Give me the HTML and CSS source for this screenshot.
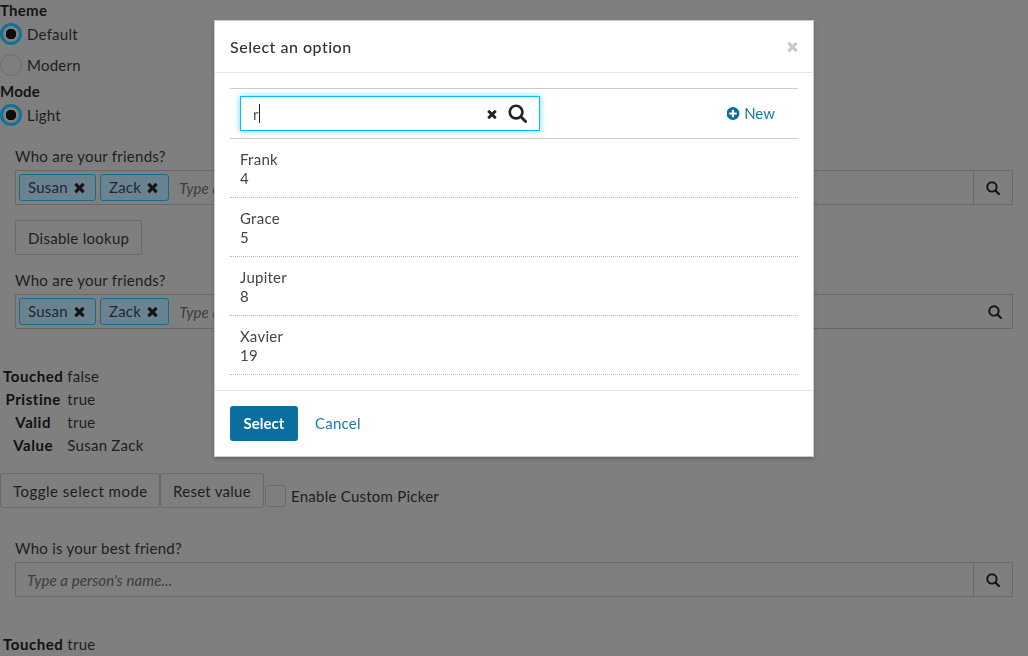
FILE: index.html
```html
<!DOCTYPE html>
<html lang="en">
    <head>
        <meta charset="UTF-8" />
        <title>Lookup demo</title>
        <link rel="stylesheet" href="styles.css">
    </head>
    <body>
        <svg class="defs" width="0" height="0">
            <symbol id="i-times" viewBox="110 238 1188 1316"><path d="M1298 1322q0 40-28 68l-136 136q-28 28-68 28t-68-28l-294-294-294 294q-28 28-68 28t-68-28l-136-136q-28-28-28-68t28-68l294-294-294-294q-28-28-28-68t28-68l136-136q28-28 68-28t68 28l294 294 294-294q28-28 68-28t68 28l136 136q28 28 28 68t-28 68l-294 294 294 294q28 28 28 68z"/></symbol>
            <symbol id="i-search" viewBox="0 0 20 20"><circle cx="8.5" cy="8.5" r="6.7" fill="none" stroke="currentColor" stroke-width="2.8"/><path d="M13.5 13.5l5 5" fill="none" stroke="currentColor" stroke-width="3" stroke-linecap="round"/></symbol>
            <symbol id="i-plus" viewBox="0 0 1536 1792"><path d="M1152 960v-128q0-26-19-45t-45-19h-256v-256q0-26-19-45t-45-19h-128q-26 0-45 19t-19 45v256h-256q-26 0-45 19t-19 45v128q0 26 19 45t45 19h256v256q0 26 19 45t45 19h128q26 0 45-19t19-45v-256h256q26 0 45-19t19-45zm320-64q0 209-103 385.500t-279.500 279.500-385.500 103-385.500-103-279.500-279.500-103-385.500 103-385.500 279.500-279.500 385.500-103 385.500 103 279.500 279.500 103 385.500z"/></symbol>
        </svg>

        <!-- theme / mode -->
        <div class="group-title">Theme</div>
        <label class="radio"><span class="dot on"></span>Default</label>
        <label class="radio radio-off"><span class="dot"></span>Modern</label>
        <div class="group-title mode-title">Mode</div>
        <label class="radio"><span class="dot on"></span>Light</label>

        <!-- lookup 1 -->
        <section class="field first-field">
            <div class="field-label">Who are your friends?</div>
            <div class="lookup">
                <span class="chip">Susan <svg class="chip-x"><use href="#i-times"/></svg></span>
                <span class="chip">Zack <svg class="chip-x"><use href="#i-times"/></svg></span>
                <span class="ph">Type a person's name...</span>
                <span class="lookup-btn with-line"><svg class="search-sm"><use href="#i-search"/></svg></span>
            </div>
        </section>
        <button class="btn disable-btn">Disable lookup</button>

        <!-- lookup 2 -->
        <section class="field">
            <div class="field-label">Who are your friends?</div>
            <div class="lookup">
                <span class="chip">Susan <svg class="chip-x"><use href="#i-times"/></svg></span>
                <span class="chip">Zack <svg class="chip-x"><use href="#i-times"/></svg></span>
                <span class="ph">Type a person's name...</span>
                <span class="lookup-btn no-line"><svg class="search-sm"><use href="#i-search"/></svg></span>
            </div>
        </section>

        <table class="status">
            <tr><th>Touched</th><td>false</td></tr>
            <tr><th>Pristine</th><td>true</td></tr>
            <tr><th>Valid</th><td>true</td></tr>
            <tr><th>Value</th><td>Susan Zack</td></tr>
        </table>

        <div class="actions">
            <button class="btn toggle-btn">Toggle select mode</button>
            <button class="btn reset-btn">Reset value</button>
            <span class="check"></span>
            <span class="check-label">Enable Custom Picker</span>
        </div>

        <!-- lookup 3 -->
        <section class="field best-field">
            <div class="field-label">Who is your best friend?</div>
            <div class="lookup single">
                <span class="ph">Type a person's name...</span>
                <span class="lookup-btn with-line"><svg class="search-sm"><use href="#i-search"/></svg></span>
            </div>
        </section>

        <table class="status status-last">
            <tr><th>Touched</th><td>true</td></tr>
        </table>

        <!-- modal -->
        <div class="modal">
            <header class="modal-head">
                <h3>Select an option</h3>
                <svg class="modal-close"><use href="#i-times"/></svg>
            </header>
            <div class="modal-body">
                <div class="toolbar">
                    <div class="search-box">
                        <span class="search-text">r</span><span class="caret"></span>
                        <svg class="search-clear"><use href="#i-times"/></svg>
                        <svg class="search-go"><use href="#i-search"/></svg>
                    </div>
                    <a class="new-link"><svg class="plus"><use href="#i-plus"/></svg>New</a>
                </div>
                <ul class="results">
                    <li>Frank<br>4</li>
                    <li>Grace<br>5</li>
                    <li>Jupiter<br>8</li>
                    <li>Xavier<br>19</li>
                </ul>
            </div>
            <footer class="modal-foot">
                <button class="btn-primary">Select</button>
                <a class="cancel">Cancel</a>
            </footer>
        </div>
    </body>
</html>
```

FILE: styles.css
```css
html,
body {
    height: 100%;
    overflow: hidden;
}
body {
    margin: 0;
    background-color: #7f7f7f;
    color: #141414;
    font-family: "Lato", "Liberation Sans", sans-serif;
    font-size: 15px;
    line-height: 20px;
    letter-spacing: 0.25px;
}
.defs {
    position: absolute;
}

/* theme, mode */
.group-title {
    font-weight: 700;
    height: 20px;
}
.mode-title {
    margin-top: 5px;
}
.radio {
    display: flex;
    align-items: center;
    gap: 5px;
    height: 22px;
    margin-top: 3px;
    color: #1e1e1e;
}
.radio-off {
    margin-top: 9px;
}
.dot {
    display: block;
    box-sizing: border-box;
    width: 22px;
    height: 22px;
    border: 1px solid #6c6c6c;
    border-radius: 50%;
}
.dot.on {
    border: 3px solid #0e7396;
    background: radial-gradient(circle, #0d0d0d 0 5px, #7f7f7f 5.5px);
}

/* lookup */
.field {
    margin: 15px 15px 0;
}
.first-field {
    margin-top: 20px;
}
.best-field {
    margin-top: 30px;
}
.field-label {
    height: 24px;
    color: #1e1e1e;
}
.lookup {
    display: flex;
    align-items: center;
    gap: 4px;
    box-sizing: border-box;
    height: 35px;
    padding-left: 3px;
    border: 1px solid #696969;
}
.lookup.single {
    padding-left: 0;
}
.chip {
    display: flex;
    align-items: center;
    gap: 6px;
    box-sizing: border-box;
    height: 27px;
    padding: 0 10px 2px 8px;
    border: 1px solid #146c8a;
    border-radius: 3px;
    background-color: #6b8290;
    color: #1c2933;
}
.chip-x {
    width: 11px;
    height: 11px;
    margin-top: 2px;
    fill: #161616;
}
.ph {
    flex: 1;
    margin-left: 6px;
    color: #3d3d3d;
    font-style: italic;
    letter-spacing: 0.1px;
}
.single .ph {
    margin-left: 11px;
}
.lookup-btn {
    display: flex;
    align-items: center;
    justify-content: center;
    box-sizing: border-box;
    width: 39px;
    height: 33px;
    color: #141414;
}
.no-line {
    padding-left: 5px;
}
.with-line {
    border-left: 1px solid #696969;
}
.search-sm {
    width: 14px;
    height: 14px;
}

/* buttons */
.btn {
    box-sizing: border-box;
    height: 35px;
    padding: 0 12px;
    background: transparent;
    border: 1px solid #696969;
    border-radius: 3px;
    color: #1e1e1e;
    font: inherit;
    letter-spacing: 0.27px;
    white-space: nowrap;
}
.toggle-btn {
    width: 160px;
    letter-spacing: 0.5px;
}
.reset-btn {
    width: 104px;
}
.disable-btn {
    display: block;
    margin: 15px 0 0 15px;
}

/* status table */
.status {
    margin-top: 36px;
    border-collapse: collapse;
}
.status th {
    padding: 0 2px 1px 3px;
    height: 22px;
    color: #111;
    text-align: center;
    font-weight: 700;
    letter-spacing: 0.55px;
}
.status td {
    padding: 0 2px 1px;
    color: #1e1e1e;
}
.actions {
    display: flex;
    align-items: flex-start;
    margin-top: 16px;
}
.check {
    display: block;
    box-sizing: border-box;
    width: 21px;
    height: 22px;
    margin: 12px 5px 0 1px;
    border: 1px solid #6c6c6c;
    border-radius: 3px;
}
.check-label {
    margin-top: 13px;
    color: #1e1e1e;
}

/* modal */
.modal {
    position: fixed;
    top: 20px;
    left: 214px;
    box-sizing: border-box;
    width: 600px;
    height: 437px;
    background-color: #fff;
    border: 1px solid #ccc;
    box-shadow: 0 2px 4px rgba(0, 0, 0, 0.2);
    color: #444;
}
.modal-head {
    display: flex;
    align-items: center;
    justify-content: space-between;
    box-sizing: border-box;
    height: 52px;
    padding: 0 15px;
    border-bottom: 1px solid #e5e5e5;
}
.modal-head h3 {
    margin: 0;
    color: #333;
    font-size: 16px;
    font-weight: 500;
    letter-spacing: 0.5px;
}
.modal-close {
    width: 11px;
    height: 11px;
    fill: #c9c9c9;
}
.modal-body {
    padding: 15px 15px 0;
    height: 318px;
    box-sizing: border-box;
    border-bottom: 1px solid #e5e5e5;
}
.toolbar {
    display: flex;
    align-items: center;
    justify-content: space-between;
    height: 51px;
    padding: 0 23px 0 10px;
    box-sizing: border-box;
    border-top: 1px solid #ccc;
    border-bottom: 1px solid #ccc;
}
.search-box {
    display: flex;
    align-items: center;
    box-sizing: border-box;
    width: 300px;
    height: 35px;
    padding: 0 12px;
    border: 1px solid #00bfff;
    box-shadow: 0 0 6px rgba(0, 191, 255, 0.6);
    color: #555;
}
.caret {
    width: 1px;
    height: 19px;
    background-color: #222;
}
.search-clear {
    width: 10px;
    height: 10px;
    margin-left: auto;
    fill: #222;
}
.search-go {
    width: 19px;
    height: 19px;
    margin-left: 11px;
    color: #222;
}
.new-link {
    display: flex;
    align-items: center;
    gap: 4px;
    padding-bottom: 1px;
    color: #1b7ba3;
    letter-spacing: 0;
}
.plus {
    width: 13px;
    height: 15px;
    fill: #0a6f9e;
}
.results {
    margin: 0;
    padding: 0;
    list-style: none;
}
.results li {
    box-sizing: border-box;
    height: 59px;
    padding: 10.5px 10px 0;
    line-height: 19px;
    border-bottom: 1px dotted #bbb;
}
.modal-foot {
    display: flex;
    align-items: center;
    gap: 17px;
    padding: 15px;
}
.btn-primary {
    box-sizing: border-box;
    width: 68px;
    height: 35px;
    padding: 0 0 2px;
    background-color: #0a6f9e;
    border: 0;
    border-radius: 3px;
    color: #fff;
    font: inherit;
    font-weight: 700;
}
.cancel {
    padding-bottom: 2px;
    color: #1b7ba3;
}
```
